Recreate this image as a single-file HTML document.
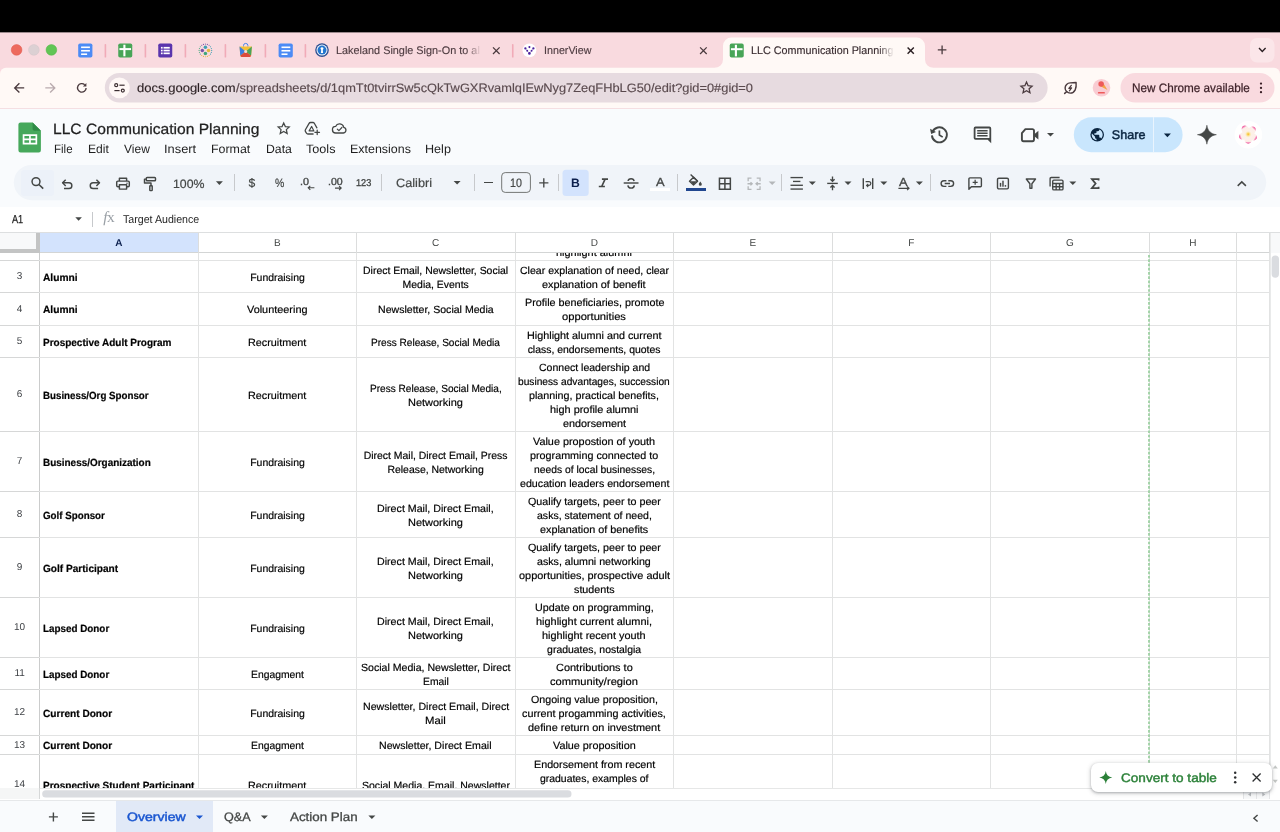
<!DOCTYPE html>
<html lang="en"><head><meta charset="utf-8"><title>LLC Communication Planning - Google Sheets</title>
<style>
*{box-sizing:border-box;margin:0;padding:0}
html,body{width:1280px;height:832px;overflow:hidden;background:#fff;font-family:"Liberation Sans",sans-serif;color:#1f1f1f;text-rendering:geometricPrecision}
.abs{position:absolute}
#root{position:relative;width:1280px;height:832px;overflow:hidden;background:#f9fbfd;will-change:transform}
.t{position:absolute;white-space:nowrap;display:block}
svg{position:absolute;overflow:visible}
.cr{-webkit-text-stroke:0.18px #000}
.cb{-webkit-text-stroke:0.2px #000}

</style></head><body><div id="root">
<div class="abs" style="left:0px;top:0px;width:1280px;height:33px;background:#000;"></div>
<div class="abs" style="left:0px;top:32.6px;width:1280px;height:45px;background:#f9dadf;"></div>
<div class="abs" style="left:0px;top:32.3px;width:1280px;height:0.8px;background:#9c8a8d;"></div>
<svg style="left:0px;top:67px;" width="1281" height="42" viewBox="0 0 1281 42"><g transform="translate(0.000 0.800)"><path d="M0 40 V6 A6 6 0 0 1 6 0 H1274 A6 6 0 0 1 1280 6 V40 Z" fill="#fff9f6"/></g></svg>
<div class="abs" style="left:0px;top:107.6px;width:1280px;height:1.2px;background:#f5dfe2;"></div>
<svg style="left:11px;top:44px;" width="12" height="13" viewBox="0 0 12 13"><g transform="translate(0.250 0.550)"><circle cx="5.35" cy="5.35" r="5.35" fill="#ed6a5e" stroke="#e1574b" stroke-width="0.5"/></g></svg>
<svg style="left:28px;top:44px;" width="13" height="13" viewBox="0 0 13 13"><g transform="translate(0.550 0.550)"><circle cx="5.35" cy="5.35" r="5.35" fill="#dcd0d3" stroke="#d2c5c8" stroke-width="0.5"/></g></svg>
<svg style="left:46px;top:44px;" width="12" height="13" viewBox="0 0 12 13"><g transform="translate(0.050 0.550)"><circle cx="5.35" cy="5.35" r="5.35" fill="#61c554" stroke="#52b546" stroke-width="0.5"/></g></svg>
<svg style="left:104px;top:44px;" width="4" height="15" viewBox="0 0 4 15"><g transform="translate(0.600 0.100)"><rect width="1.6" height="13.5" rx="0.7" fill="#f1abb8"/></g></svg>
<svg style="left:144px;top:44px;" width="4" height="15" viewBox="0 0 4 15"><g transform="translate(0.600 0.100)"><rect width="1.6" height="13.5" rx="0.7" fill="#f1abb8"/></g></svg>
<svg style="left:184px;top:44px;" width="4" height="15" viewBox="0 0 4 15"><g transform="translate(0.600 0.100)"><rect width="1.6" height="13.5" rx="0.7" fill="#f1abb8"/></g></svg>
<svg style="left:224px;top:44px;" width="4" height="15" viewBox="0 0 4 15"><g transform="translate(0.600 0.100)"><rect width="1.6" height="13.5" rx="0.7" fill="#f1abb8"/></g></svg>
<svg style="left:264px;top:44px;" width="4" height="15" viewBox="0 0 4 15"><g transform="translate(0.600 0.100)"><rect width="1.6" height="13.5" rx="0.7" fill="#f1abb8"/></g></svg>
<svg style="left:304px;top:44px;" width="4" height="15" viewBox="0 0 4 15"><g transform="translate(0.600 0.100)"><rect width="1.6" height="13.5" rx="0.7" fill="#f1abb8"/></g></svg>
<svg style="left:511px;top:44px;" width="4" height="15" viewBox="0 0 4 15"><g transform="translate(0.950 0.100)"><rect width="1.6" height="13.5" rx="0.7" fill="#f1abb8"/></g></svg>
<svg style="left:78px;top:43px;" width="16" height="16" viewBox="0 0 16 16"><g transform="translate(0.200 0.500)"><rect x="0" y="0" width="14.2" height="14" rx="1.8" fill="#4c8bf5"/><rect x="2.9" y="3" width="8.8" height="1.6" fill="#fff"/><rect x="2.9" y="6.45" width="8.8" height="1.6" fill="#fff"/><rect x="2.9" y="9.9" width="6" height="1.6" fill="#fff"/></g></svg>
<svg style="left:118px;top:43px;" width="16" height="16" viewBox="0 0 16 16"><g transform="translate(0.250 0.500)"><rect width="14" height="14" rx="1.8" fill="#48a557"/><rect x="5.1" y="1.2" width="2.1" height="11.6" fill="#fff"/><rect x="1.2" y="4.6" width="11.6" height="2" fill="#fff"/></g></svg>
<svg style="left:158px;top:43px;" width="16" height="16" viewBox="0 0 16 16"><g transform="translate(0.250 0.500)"><rect width="14" height="14" rx="1.8" fill="#5a35ad"/><g fill="#fff"><rect x="2.7" y="3.4" width="1.7" height="1.7"/><rect x="5.3" y="3.4" width="6.2" height="1.7"/><rect x="2.7" y="6.2" width="1.7" height="1.7"/><rect x="5.3" y="6.2" width="6.2" height="1.7"/><rect x="2.7" y="9" width="1.7" height="1.7"/><rect x="5.3" y="9" width="6.2" height="1.7"/></g></g></svg>
<svg style="left:198px;top:43px;" width="16" height="16" viewBox="0 0 16 16"><g transform="translate(0.400 0.400)"><circle cx="13.30" cy="7.00" r="0.55" fill="#3f9fb5"/><circle cx="12.99" cy="8.95" r="0.55" fill="#3f9fb5"/><circle cx="12.10" cy="10.70" r="0.55" fill="#3f9fb5"/><circle cx="10.70" cy="12.10" r="0.55" fill="#e5b93c"/><circle cx="8.95" cy="12.99" r="0.55" fill="#e5b93c"/><circle cx="7.00" cy="13.30" r="0.55" fill="#e5b93c"/><circle cx="5.05" cy="12.99" r="0.55" fill="#e5b93c"/><circle cx="3.30" cy="12.10" r="0.55" fill="#e5b93c"/><circle cx="1.90" cy="10.70" r="0.55" fill="#3fa77a"/><circle cx="1.01" cy="8.95" r="0.55" fill="#3fa77a"/><circle cx="0.70" cy="7.00" r="0.55" fill="#3fa77a"/><circle cx="1.01" cy="5.05" r="0.55" fill="#3fa77a"/><circle cx="1.90" cy="3.30" r="0.55" fill="#3fa77a"/><circle cx="3.30" cy="1.90" r="0.55" fill="#7a55a8"/><circle cx="5.05" cy="1.01" r="0.55" fill="#7a55a8"/><circle cx="7.00" cy="0.70" r="0.55" fill="#7a55a8"/><circle cx="8.95" cy="1.01" r="0.55" fill="#7a55a8"/><circle cx="10.70" cy="1.90" r="0.55" fill="#7a55a8"/><circle cx="12.10" cy="3.30" r="0.55" fill="#3f9fb5"/><circle cx="12.99" cy="5.05" r="0.55" fill="#3f9fb5"/><circle cx="7" cy="3.9" r="1.75" fill="#3f9fb5"/><circle cx="3.9" cy="7" r="1.75" fill="#7a55a8"/><circle cx="10.1" cy="7" r="1.75" fill="#e5b93c"/><circle cx="7" cy="10.1" r="1.75" fill="#3fa77a"/></g></svg>
<svg style="left:239px;top:43px;" width="15" height="16" viewBox="0 0 15 16"><g transform="translate(0.200 0.000)"><path d="M4.3 3.6 V2.6 a2.2 2.2 0 0 1 4.4 0 V3.6" fill="none" stroke="#4a86e8" stroke-width="1"/><path d="M0.3 3.6 H12.7 L11.9 12.6 a1.4 1.4 0 0 1 -1.4 1.3 H2.5 a1.4 1.4 0 0 1 -1.4 -1.3 Z" fill="#f3c13a"/><path d="M0.3 3.6 L6.5 8.6 L1.1 12.8 Z" fill="#3f7de0"/><path d="M12.7 3.6 L6.5 8.6 L11.9 12.8 Z" fill="#4aa35a"/><path d="M6.5 8.6 L11.9 12.8 a1.4 1.4 0 0 1 -1.4 1.1 H2.5 a1.4 1.4 0 0 1 -1.4 -1.1 Z" fill="#dc4a3d"/><circle cx="6.5" cy="8.4" r="1.5" fill="#f4ddd6"/></g></svg>
<svg style="left:278px;top:43px;" width="16" height="16" viewBox="0 0 16 16"><g transform="translate(0.600 0.500)"><rect x="0" y="0" width="14.2" height="14" rx="1.8" fill="#4c8bf5"/><rect x="2.9" y="3" width="8.8" height="1.6" fill="#fff"/><rect x="2.9" y="6.45" width="8.8" height="1.6" fill="#fff"/><rect x="2.9" y="9.9" width="6" height="1.6" fill="#fff"/></g></svg>
<svg style="left:315px;top:43px;" width="15" height="15" viewBox="0 0 15 15"><g transform="translate(0.200 0.300)"><circle cx="6.8" cy="6.8" r="6.8" fill="#2c4f91"/><circle cx="6.8" cy="6.8" r="5.5" fill="#f3f6fb"/><circle cx="6.8" cy="6.8" r="4.5" fill="#2277cf"/><circle cx="6.8" cy="5.3" r="1.45" fill="#fff"/><path d="M6.1 5.6 H7.5 L7.9 9.6 H5.7 Z" fill="#fff"/></g></svg>
<span class="t" style="left:336.00px;top:46px;font-size:11px;line-height:11px;color:#4f3d42;transform:scaleX(0.9880);transform-origin:0 0;-webkit-text-stroke:0.15px #4f3d42;">Lakeland Single Sign-On to al</span>
<div class="abs" style="left:466px;top:42px;width:18px;height:17px;background:linear-gradient(to right,rgba(249,218,223,0),#f9dadf 85%)"></div>
<svg style="left:493px;top:47px;" width="8" height="9" viewBox="0 0 8 9"><g transform="translate(0.000 0.400)"><path d="M0 0 L6.6 6.6 M6.6 0 L0 6.6" stroke="#4a3a3e" stroke-width="1.25" fill="none"/></g></svg>
<svg style="left:522px;top:43px;" width="16" height="16" viewBox="0 0 16 16"><g transform="translate(0.500 0.500)"><circle cx="6.9" cy="6.9" r="6.9" fill="#fff"/><g fill="#4a1f9c"><circle cx="6.9" cy="3.6" r="1.05"/><circle cx="2.9" cy="4.9" r="1.15"/><circle cx="10.9" cy="4.9" r="1.15"/><circle cx="4.7" cy="7.3" r="0.95"/><circle cx="9.1" cy="7.3" r="0.95"/><circle cx="6.9" cy="9.9" r="1.3"/><path d="M2.9 4.9 L6.9 9.9 L10.9 4.9" stroke="#4a1f9c" stroke-width="0.5" fill="none" opacity="0.55"/></g></g></svg>
<span class="t" style="left:543.80px;top:46px;font-size:11px;line-height:11px;color:#4f3d42;transform:scaleX(0.9730);transform-origin:0 0;-webkit-text-stroke:0.15px #4f3d42;">InnerView</span>
<svg style="left:700px;top:47px;" width="8" height="9" viewBox="0 0 8 9"><g transform="translate(0.100 0.400)"><path d="M0 0 L6.6 6.6 M6.6 0 L0 6.6" stroke="#4a3a3e" stroke-width="1.25" fill="none"/></g></svg>
<svg style="left:714px;top:37px;" width="221" height="32" viewBox="0 0 221 32"><g transform="translate(0.500 0.600)"><path d="M0 30.4 A8.5 8.5 0 0 0 8.5 21.9 V8.5 A8.5 8.5 0 0 1 17 0 H202 A8.5 8.5 0 0 1 210.5 8.5 V21.9 A8.5 8.5 0 0 0 219 30.4 Z" fill="#fff9f6"/></g></svg>
<svg style="left:729px;top:43px;" width="16" height="16" viewBox="0 0 16 16"><g transform="translate(0.750 0.600)"><rect width="14" height="14" rx="1.8" fill="#48a557"/><rect x="5.1" y="1.2" width="2.1" height="11.6" fill="#fff"/><rect x="1.2" y="4.6" width="11.6" height="2" fill="#fff"/></g></svg>
<span class="t" style="left:750.90px;top:46px;font-size:11px;line-height:11px;color:#3a2d31;transform:scaleX(0.9799);transform-origin:0 0;-webkit-text-stroke:0.15px #3a2d31;">LLC Communication Planning</span>
<div class="abs" style="left:878px;top:42px;width:18px;height:17px;background:linear-gradient(to right,rgba(255,248,245,0),#fff9f6 90%)"></div>
<svg style="left:907px;top:47px;" width="8" height="8" viewBox="0 0 8 8"><g transform="translate(0.600 0.600)"><path d="M0 0 L6.2 6.2 M6.2 0 L0 6.2" stroke="#2a1f22" stroke-width="1.45" fill="none"/></g></svg>
<svg style="left:937px;top:45px;" width="11" height="11" viewBox="0 0 11 11"><g transform="translate(0.800 0.600)"><path d="M4.3 0 V8.6 M0 4.3 H8.6" stroke="#4a3a3e" stroke-width="1.3" fill="none"/></g></svg>
<svg style="left:1250px;top:38px;" width="26" height="26" viewBox="0 0 26 26"><g><rect width="24.5" height="24.5" rx="7" fill="#fbe6e9"/></g></svg>
<svg style="left:1258px;top:47px;" width="9" height="7" viewBox="0 0 9 7"><g transform="translate(0.600 0.600)"><path d="M0.4 0.5 L3.7 3.8 L7 0.5" stroke="#2a1f22" stroke-width="1.4" fill="none"/></g></svg>
<svg style="left:13px;top:82px;" width="13" height="13" viewBox="0 0 13 13"><g transform="translate(0.800 0.600)"><path d="M5.6 0.6 L0.9 5.3 L5.6 10 M1 5.3 H10.4" stroke="#4a3a3e" stroke-width="1.35" fill="none"/></g></svg>
<svg style="left:45px;top:82px;" width="12" height="13" viewBox="0 0 12 13"><g transform="translate(0.100 0.600)"><path d="M5 0.6 L9.7 5.3 L5 10 M9.6 5.3 H0.2" stroke="#b9abae" stroke-width="1.35" fill="none"/></g></svg>
<svg style="left:76px;top:82px;" width="13" height="13" viewBox="0 0 13 13"><g transform="translate(0.500 0.500)"><path d="M9.6 5.4 A4.3 4.3 0 1 1 8.2 2.2" stroke="#4a3a3e" stroke-width="1.35" fill="none"/><path d="M9.9 0.4 V3.9 H6.4 Z" fill="#4a3a3e"/></g></svg>
<svg style="left:104px;top:73px;" width="945" height="31" viewBox="0 0 945 31"><g transform="translate(0.800 0.000)"><rect width="942.8" height="29.6" rx="14.8" fill="#e7dbe0"/></g></svg>
<svg style="left:109px;top:77px;" width="22" height="23" viewBox="0 0 22 23"><g transform="translate(0.000 0.400)"><circle cx="10.4" cy="10.4" r="10.4" fill="#fff8f6"/></g></svg>
<svg style="left:114px;top:83px;" width="12" height="11" viewBox="0 0 12 11"><g transform="translate(0.000 0.200)"><g stroke="#3b2e31" stroke-width="1.2" fill="none"><circle cx="2.2" cy="2" r="1.5"/><path d="M5.4 2 H10.6"/><circle cx="8.8" cy="7.4" r="1.5"/><path d="M0.4 7.4 H5.6"/></g></g></svg>
<span class="t" style="left:137.10px;top:82px;font-size:12.2px;line-height:12.2px;color:#2a1f22;transform:scaleX(1.0690);transform-origin:0 0;-webkit-text-stroke:0.15px #2a1f22;">docs.google.com</span>
<span class="t" style="left:235.60px;top:82px;font-size:12.2px;line-height:12.2px;color:#5a4a4e;transform:scaleX(1.0527);transform-origin:0 0;-webkit-text-stroke:0.15px #5a4a4e;">/spreadsheets/d/1qmTt0tvirrSw5cQkTwGXRvamlqIEwNyg7ZeqFHbLG50/edit?gid=0#gid=0</span>
<svg style="left:1020px;top:81px;" width="14" height="14" viewBox="0 0 14 14"><g transform="translate(0.100 0.200)"><path d="M6.4 0.9 L8.0 4.55 L11.95 4.95 L9 7.6 L9.85 11.5 L6.4 9.5 L2.95 11.5 L3.8 7.6 L0.85 4.95 L4.8 4.55 Z" stroke="#4a3a3e" stroke-width="1.3" fill="none" stroke-linejoin="miter"/></g></svg>
<svg style="left:1063px;top:81px;" width="15" height="15" viewBox="0 0 15 15"><g transform="translate(0.900 0.800)"><g stroke="#4a3a3e" fill="none" stroke-linejoin="round" stroke-linecap="round"><path d="M12.2 0.7 C12.7 6.2 11.3 11.3 6.3 11.3 A5.1 5.1 0 0 1 6.3 1.1 C8.6 1.1 10.5 0.9 12.2 0.7 Z" stroke-width="1.4"/><path d="M2.7 9.9 L0.8 11.6" stroke-width="1.5"/><path d="M7.4 3.5 L5 6.6 L7.7 6 L5.5 9" stroke-width="1.25"/></g></g></svg>
<svg style="left:1092px;top:79px;" width="20" height="19" viewBox="0 0 20 19"><g transform="translate(0.700 0.000)"><circle cx="8.8" cy="8.8" r="8.8" fill="#f9ccd2"/></g></svg>
<svg style="left:1092px;top:79px;" width="20" height="19" viewBox="0 0 20 19"><g transform="translate(0.700 0.000)"><path d="M7.3 6.9 L10.7 4.3 L14.8 10.9 Z" fill="#f2a545"/><circle cx="8.4" cy="4.9" r="2.75" fill="#ee5a5a"/><rect x="5.2" y="13.1" width="7" height="1.5" rx="0.6" fill="#ee5a5a"/></g></svg>
<svg style="left:1120px;top:73px;" width="156" height="31" viewBox="0 0 156 31"><g transform="translate(0.500 0.000)"><rect width="154" height="29.6" rx="14.8" fill="#f9dadf"/></g></svg>
<span class="t" style="left:1131.50px;top:82px;font-size:12.2px;line-height:12.2px;color:#3b1f26;transform:scaleX(0.9608);transform-origin:0 0;-webkit-text-stroke:0.25px #3b1f26;">New Chrome available</span>
<svg style="left:1259px;top:82px;" width="5" height="4" viewBox="0 0 5 4"><g transform="translate(0.850 0.450)"><circle cx="1.15" cy="1.15" r="1.15" fill="#3b1f26"/></g></svg>
<svg style="left:1259px;top:86px;" width="5" height="5" viewBox="0 0 5 5"><g transform="translate(0.850 0.750)"><circle cx="1.15" cy="1.15" r="1.15" fill="#3b1f26"/></g></svg>
<svg style="left:1259px;top:91px;" width="5" height="4" viewBox="0 0 5 4"><g transform="translate(0.850 0.050)"><circle cx="1.15" cy="1.15" r="1.15" fill="#3b1f26"/></g></svg>
<svg style="left:18px;top:122px;" width="24" height="32" viewBox="0 0 24 32"><g transform="translate(0.400 0.400)"><path d="M2.2 0 H14.2 L22.5 8.3 V27.9 a2.2 2.2 0 0 1 -2.2 2.2 H2.2 a2.2 2.2 0 0 1 -2.2 -2.2 V2.2 a2.2 2.2 0 0 1 2.2 -2.2 Z" fill="#46a85b"/><path d="M14.2 0 L22.5 8.3 H16 a1.8 1.8 0 0 1 -1.8 -1.8 Z" fill="#2f8a46"/><path d="M4.3 11.9 H18.8 V22 H4.3 Z M6 13.6 V16.1 H10.7 V13.6 Z M12.4 13.6 V16.1 H17.1 V13.6 Z M6 17.8 V20.3 H10.7 V17.8 Z M12.4 17.8 V20.3 H17.1 V17.8 Z" fill="#fff" fill-rule="evenodd"/></g></svg>
<span class="t" style="left:53.40px;top:123px;font-size:14.9px;line-height:14.9px;color:#1f1f1f;transform:scaleX(1.0477);transform-origin:0 0;-webkit-text-stroke:0.25px #1f1f1f;">LLC Communication Planning</span>
<span class="t" style="left:54.40px;top:143px;font-size:12.1px;line-height:12.1px;color:#1f1f1f;transform:scaleX(0.9545);transform-origin:0 0;">File</span>
<span class="t" style="left:88.00px;top:143px;font-size:12.1px;line-height:12.1px;color:#1f1f1f;">Edit</span>
<span class="t" style="left:123.90px;top:143px;font-size:12.1px;line-height:12.1px;color:#1f1f1f;transform:scaleX(0.9925);transform-origin:0 0;">View</span>
<span class="t" style="left:164.30px;top:143px;font-size:12.1px;line-height:12.1px;color:#1f1f1f;transform:scaleX(1.0646);transform-origin:0 0;">Insert</span>
<span class="t" style="left:211.20px;top:143px;font-size:12.1px;line-height:12.1px;color:#1f1f1f;transform:scaleX(1.0261);transform-origin:0 0;">Format</span>
<span class="t" style="left:265.60px;top:143px;font-size:12.1px;line-height:12.1px;color:#1f1f1f;transform:scaleX(1.0139);transform-origin:0 0;">Data</span>
<span class="t" style="left:306.00px;top:143px;font-size:12.1px;line-height:12.1px;color:#1f1f1f;transform:scaleX(1.0449);transform-origin:0 0;">Tools</span>
<span class="t" style="left:349.60px;top:143px;font-size:12.1px;line-height:12.1px;color:#1f1f1f;transform:scaleX(1.0294);transform-origin:0 0;">Extensions</span>
<span class="t" style="left:424.60px;top:143px;font-size:12.1px;line-height:12.1px;color:#1f1f1f;transform:scaleX(1.0413);transform-origin:0 0;">Help</span>
<svg style="left:277px;top:122px;" width="15" height="14" viewBox="0 0 15 14"><g transform="translate(0.300 0.000)"><path d="M6.4 1 L8.05 4.55 L11.95 5 L9.05 7.65 L9.85 11.5 L6.4 9.55 L2.95 11.5 L3.75 7.65 L0.85 5 L4.75 4.55 Z" stroke="#444746" stroke-width="1.25" fill="none" stroke-linejoin="miter"/></g></svg>
<svg style="left:304px;top:121px;" width="17" height="16" viewBox="0 0 17 16"><g transform="translate(0.500 0.800)"><g stroke="#444746" stroke-width="1.3" fill="none" stroke-linejoin="round" stroke-linecap="round"><path d="M8.6 12.2 H3.4 a1.6 1.6 0 0 1 -1.4 -0.8 L0.9 9.5 a1.6 1.6 0 0 1 0 -1.6 L4.6 1.5 a1.6 1.6 0 0 1 1.4 -0.8 H8.4 a1.6 1.6 0 0 1 1.4 0.8 L12.4 6"/><path d="M7.2 4.6 L4.6 9.1 H9.4 Z" stroke-width="1.1"/><path d="M12.7 8.2 V12.8 M10.4 10.5 H15" stroke-width="1.25"/></g></g></svg>
<svg style="left:331px;top:123px;" width="18" height="12" viewBox="0 0 18 12"><g transform="translate(0.900 0.200)"><g stroke="#444746" stroke-width="1.3" fill="none" stroke-linejoin="round" stroke-linecap="round"><path d="M4 9.8 a3.3 3.3 0 0 1 -0.3 -6.6 a4.3 4.3 0 0 1 8.1 0.9 a2.9 2.9 0 0 1 -0.3 5.7 Z"/><path d="M5.4 5.9 L7 7.5 L10 4.3" stroke-width="1.2"/></g></g></svg>
<svg style="left:929px;top:125px;" width="20" height="20" viewBox="0 0 20 20"><g transform="translate(0.800 0.800)"><g stroke="#444746" fill="none" stroke-width="1.9"><path d="M2.6 6.3 A7.5 7.5 0 1 1 2.1 9.6"/><path d="M9.6 4.6 V9.2 L12.9 11.3" stroke-width="1.7"/></g><path d="M0.3 3 L1.3 8.1 L6.2 6.2 Z" fill="#444746"/></g></svg>
<svg style="left:973px;top:126px;" width="20" height="19" viewBox="0 0 20 19"><g transform="translate(0.700 0.600)"><path d="M1.8 0 H15.7 a1.8 1.8 0 0 1 1.8 1.8 V16.6 L14 13.2 H1.8 a1.8 1.8 0 0 1 -1.8 -1.8 V1.8 a1.8 1.8 0 0 1 1.8 -1.8 Z M1.8 1.8 V11.4 H15.7 V1.8 Z" fill="#444746" fill-rule="evenodd"/><g fill="#444746"><rect x="3.5" y="3.4" width="10.4" height="1.5"/><rect x="3.5" y="5.9" width="10.4" height="1.5"/><rect x="3.5" y="8.4" width="10.4" height="1.5"/></g></g></svg>
<svg style="left:1021px;top:128px;" width="19" height="16" viewBox="0 0 19 16"><g transform="translate(0.000 0.200)"><path d="M4.4 0.95 H11.4 a1.6 1.6 0 0 1 1.6 1.6 V11.4 a1.6 1.6 0 0 1 -1.6 1.6 H2.5 a1.6 1.6 0 0 1 -1.6 -1.6 V4.9 Z" stroke="#444746" stroke-width="1.9" fill="none" stroke-linejoin="round"/><path d="M13 6.2 L17.4 2.6 V11.4 L13 7.8 Z" fill="#444746"/></g></svg>
<svg style="left:1047px;top:133px;" width="8" height="5" viewBox="0 0 8 5"><g><path d="M0 0 H7 L3.5 3.6 Z" fill="#444746"/></g></svg>
<svg style="left:1073px;top:117px;" width="111" height="37" viewBox="0 0 111 37"><g transform="translate(0.800 0.300)"><rect width="108.8" height="34.9" rx="17.45" fill="#c9e6fd"/></g></svg>
<div class="abs" style="left:1153.2px;top:117.3px;width:0.9px;height:34.9px;background:#e9f4fe;"></div>
<svg style="left:1090px;top:127px;" width="16" height="16" viewBox="0 0 16 16"><g transform="translate(0.400 0.900)"><circle cx="6.8" cy="6.8" r="6.8" fill="#0a2540"/><path d="M6.1 12.4 C3.4 12 1.3 9.7 1.3 6.9 c0 -0.4 0.1 -0.9 0.2 -1.3 L4.7 8.8 v0.7 c0 0.8 0.6 1.4 1.4 1.4 Z M10.9 10.6 c-0.2 -0.6 -0.7 -1 -1.3 -1 H8.9 V7.5 c0 -0.4 -0.3 -0.7 -0.7 -0.7 H4 V5.4 h1.4 c0.4 0 0.7 -0.3 0.7 -0.7 V3.3 h1.4 c0.8 0 1.4 -0.6 1.4 -1.4 V1.6 c2 0.8 3.4 2.8 3.4 5.1 c0 1.4 -0.5 2.8 -1.4 3.9 Z" fill="#c9e6fd"/></g></svg>
<span class="t" style="left:1111.80px;top:129px;font-size:12.6px;line-height:12.6px;color:#0a2540;-webkit-text-stroke:0.45px #0a2540;">Share</span>
<svg style="left:1163px;top:133px;" width="9" height="6" viewBox="0 0 9 6"><g transform="translate(0.900 0.600)"><path d="M0 0 H7 L3.5 3.6 Z" fill="#0a2540"/></g></svg>
<svg style="left:1197px;top:125px;" width="21" height="21" viewBox="0 0 21 21"><g transform="translate(0.400 0.200)"><path d="M9.5 0 C10.3 5.5 13.5 8.7 19 9.5 C13.5 10.3 10.3 13.5 9.5 19 C8.7 13.5 5.5 10.3 0 9.5 C5.5 8.7 8.7 5.5 9.5 0 Z" fill="#444746" stroke="#444746" stroke-width="0.5" stroke-linejoin="round"/></g></svg>
<svg style="left:1234px;top:120px;" width="30" height="30" viewBox="0 0 30 30"><g transform="translate(0.600 0.900)"><circle cx="13.8" cy="13.8" r="13.8" fill="#fff"/></g></svg>
<svg style="left:1238px;top:124px;" width="22" height="22" viewBox="0 0 22 22"><g transform="translate(0.200 0.200)"><defs><linearGradient id="pt" x1="0" y1="0" x2="0" y2="1"><stop offset="0" stop-color="#ee4a92"/><stop offset="0.1" stop-color="#f47fb4"/><stop offset="0.24" stop-color="#fdeee9"/><stop offset="1" stop-color="#fcf3e6"/></linearGradient><radialGradient id="fl" cx="50%" cy="50%" r="50%"><stop offset="0" stop-color="#f9ad22"/><stop offset="0.35" stop-color="#fbd756" stop-opacity="0.8"/><stop offset="1" stop-color="#fdf0d0" stop-opacity="0"/></radialGradient></defs><g transform="rotate(-32 10 10)"><ellipse cx="10" cy="5.3" rx="3.8" ry="4.9" fill="url(#pt)"/></g><g transform="rotate(45 10 10)"><ellipse cx="10" cy="5.3" rx="3.8" ry="4.9" fill="url(#pt)"/></g><g transform="rotate(119 10 10)"><ellipse cx="10" cy="5.3" rx="3.8" ry="4.9" fill="url(#pt)"/></g><g transform="rotate(180 10 10)"><ellipse cx="10" cy="5.3" rx="3.8" ry="4.9" fill="url(#pt)"/></g><g transform="rotate(250 10 10)"><ellipse cx="10" cy="5.3" rx="3.8" ry="4.9" fill="url(#pt)"/></g><circle cx="10" cy="10" r="3.6" fill="url(#fl)"/></g></svg>
<svg style="left:13px;top:164px;" width="1255" height="38" viewBox="0 0 1255 38"><g transform="translate(0.800 0.900)"><rect width="1252.4" height="35.3" rx="17.65" fill="#f0f4f9"/></g></svg>
<svg style="left:21px;top:170px;" width="34" height="27" viewBox="0 0 34 27"><g><rect width="33" height="26" rx="3" fill="#ecf1f9"/></g></svg>
<svg style="left:31px;top:176px;" width="14" height="15" viewBox="0 0 14 15"><g transform="translate(0.200 0.800)"><circle cx="4.8" cy="4.8" r="3.95" stroke="#444746" stroke-width="1.5" fill="none"/><path d="M7.7 7.7 L12 11.8" stroke="#444746" stroke-width="1.6"/></g></svg>
<svg style="left:61px;top:179px;" width="13" height="11" viewBox="0 0 13 11"><g transform="translate(0.800 0.200)"><g stroke="#444746" stroke-width="1.45" fill="none" stroke-linejoin="round"><path d="M3.9 0.5 L0.8 3.6 L3.9 6.7"/><path d="M1 3.6 H7.2 a2.85 2.85 0 0 1 0 5.7 H2.2"/></g></g></svg>
<svg style="left:89px;top:179px;" width="13" height="11" viewBox="0 0 13 11"><g transform="translate(0.500 0.200)"><g stroke="#444746" stroke-width="1.45" fill="none" stroke-linejoin="round"><path d="M6.9 0.5 L10 3.6 L6.9 6.7"/><path d="M9.8 3.6 H3.6 a2.85 2.85 0 0 0 0 5.7 H8.6"/></g></g></svg>
<svg style="left:116px;top:177px;" width="15" height="14" viewBox="0 0 15 14"><g transform="translate(0.000 0.500)"><g stroke="#444746" stroke-width="1.45" fill="none" stroke-linejoin="round"><path d="M3.4 3.6 V0.7 H10.6 V3.6"/><path d="M3.4 9.3 H1.9 a1.2 1.2 0 0 1 -1.2 -1.2 V4.8 a1.2 1.2 0 0 1 1.2 -1.2 H12.1 a1.2 1.2 0 0 1 1.2 1.2 V8.1 a1.2 1.2 0 0 1 -1.2 1.2 H10.6"/><path d="M3.4 7.3 H10.6 V11.6 H3.4 Z"/></g><circle cx="11" cy="5.7" r="0.7" fill="#444746"/></g></svg>
<svg style="left:143px;top:176px;" width="15" height="17" viewBox="0 0 15 17"><g transform="translate(0.700 0.800)"><g stroke="#444746" stroke-width="1.45" fill="none" stroke-linejoin="round"><rect x="2.6" y="0.7" width="9.2" height="3.2" rx="0.8"/><path d="M2.6 2.3 H0.8 V6.2 H7.3 V9"/><rect x="6.1" y="9" width="2.4" height="4.8" rx="0.5"/></g></g></svg>
<span class="t" style="left:172.50px;top:178px;font-size:12.1px;line-height:12.1px;color:#444746;transform:scaleX(1.0184);transform-origin:0 0;-webkit-text-stroke:0.2px #444746;">100%</span>
<svg style="left:215px;top:181px;" width="9" height="5" viewBox="0 0 9 5"><g transform="translate(0.900 0.300)"><path d="M0 0 H7 L3.5 3.6 Z" fill="#444746"/></g></svg>
<div class="abs" style="left:234.15px;top:174.1px;width:0.9px;height:17.2px;background:#c7c9cc;"></div>
<span class="t" style="left:248.54px;top:177px;font-size:12.1px;line-height:12.1px;color:#444746;-webkit-text-stroke:0.2px #444746;">$</span>
<span class="t" style="left:274.85px;top:177px;font-size:12.1px;line-height:12.1px;color:#444746;transform:scaleX(0.8649);transform-origin:0 0;-webkit-text-stroke:0.2px #444746;">%</span>
<span class="t" style="left:299.80px;top:178px;font-size:10.2px;line-height:10.2px;color:#444746;transform:scaleX(1.0593);transform-origin:0 0;-webkit-text-stroke:0.35px #444746;">.0</span>
<svg style="left:307px;top:185px;" width="9" height="7" viewBox="0 0 9 7"><g transform="translate(0.400 0.400)"><path d="M7 2.4 H0.9 M2.9 0.4 L0.8 2.4 L2.9 4.4" stroke="#444746" stroke-width="1.1" fill="none"/></g></svg>
<span class="t" style="left:327.80px;top:178px;font-size:10.2px;line-height:10.2px;color:#444746;transform:scaleX(1.0380);transform-origin:0 0;-webkit-text-stroke:0.35px #444746;">.00</span>
<svg style="left:335px;top:185px;" width="8" height="7" viewBox="0 0 8 7"><g transform="translate(0.000 0.700)"><path d="M0 2.4 H6.1 M4.1 0.4 L6.2 2.4 L4.1 4.4" stroke="#444746" stroke-width="1.1" fill="none"/></g></svg>
<span class="t" style="left:356.20px;top:179px;font-size:9.9px;line-height:9.9px;color:#444746;transform:scaleX(0.9286);transform-origin:0 0;-webkit-text-stroke:0.3px #444746;">123</span>
<div class="abs" style="left:381.05px;top:174.1px;width:0.9px;height:17.2px;background:#c7c9cc;"></div>
<span class="t" style="left:395.90px;top:177px;font-size:12.2px;line-height:12.2px;color:#444746;transform:scaleX(1.0423);transform-origin:0 0;-webkit-text-stroke:0.2px #444746;">Calibri</span>
<svg style="left:453px;top:181px;" width="9" height="5" viewBox="0 0 9 5"><g transform="translate(0.600 0.000)"><path d="M0 0 H7 L3.5 3.6 Z" fill="#444746"/></g></svg>
<div class="abs" style="left:473.65000000000003px;top:174.1px;width:0.9px;height:17.2px;background:#c7c9cc;"></div>
<div class="abs" style="left:483.5px;top:182.1px;width:9.3px;height:1.35px;background:#444746;"></div>
<svg style="left:501px;top:172px;" width="31" height="22" viewBox="0 0 31 22"><g transform="translate(0.200 0.100)"><rect x="0.5" y="0.5" width="28.7" height="19.8" rx="3.5" fill="none" stroke="#747775" stroke-width="1"/></g></svg>
<span class="t" style="left:510.05px;top:177px;font-size:12.2px;line-height:12.2px;color:#444746;transform:scaleX(0.8778);transform-origin:0 0;-webkit-text-stroke:0.2px #444746;">10</span>
<svg style="left:539px;top:178px;" width="11" height="11" viewBox="0 0 11 11"><g transform="translate(0.200 0.200)"><path d="M4.6 0 V9.2 M0 4.6 H9.2" stroke="#444746" stroke-width="1.35" fill="none"/></g></svg>
<div class="abs" style="left:558.05px;top:174.1px;width:0.9px;height:17.2px;background:#c7c9cc;"></div>
<svg style="left:562px;top:169px;" width="28" height="28" viewBox="0 0 28 28"><g transform="translate(0.500 0.800)"><rect width="26.2" height="26.1" rx="3.5" fill="#d3e3fd"/></g></svg>
<span class="t" style="left:570.90px;top:177px;font-size:12.2px;line-height:12.2px;color:#0b1f4d;font-weight:700;">B</span>
<svg style="left:598px;top:178px;" width="12" height="11" viewBox="0 0 12 11"><g transform="translate(0.400 0.300)"><path d="M3.5 0.8 H9.6 M0.4 8.2 H6.5 M6.7 0.8 L3.3 8.2" stroke="#444746" stroke-width="1.65" fill="none"/></g></svg>
<svg style="left:623px;top:178px;" width="17" height="12" viewBox="0 0 17 12"><g transform="translate(0.700 0.000)"><g stroke="#444746" stroke-width="1.45" fill="none"><path d="M0 5 H14.8"/><path d="M10.4 3.1 C10.2 1.5 9 0.7 7.4 0.7 C5.7 0.7 4.5 1.6 4.4 3"/><path d="M4.2 7.3 C4.4 9.1 5.7 10.1 7.4 10.1 C9.2 10.1 10.5 9.1 10.6 7.4"/></g></g></svg>
<span class="t" style="left:655.50px;top:177px;font-size:11.8px;line-height:11.8px;color:#444746;transform:scaleX(1.0930);transform-origin:0 0;-webkit-text-stroke:0.3px #444746;">A</span>
<div class="abs" style="left:650px;top:188.1px;width:20px;height:3.2px;background:#fff;"></div>
<div class="abs" style="left:677.05px;top:174.1px;width:0.9px;height:17.2px;background:#c7c9cc;"></div>
<svg style="left:688px;top:174px;" width="16" height="13" viewBox="0 0 16 13"><g transform="translate(0.600 0.000)"><g stroke="#444746" stroke-width="1.4" fill="none" stroke-linejoin="round"><path d="M2 0.5 L9 7.3"/><path d="M5 3.3 L0.9 7.3 L4.9 11.1 L9 7.3 Z"/></g><path d="M1.6 7.3 H8.4 L4.9 10.6 Z" fill="#444746"/><path d="M11.7 7.6 C12.4 8.7 13.2 9.4 13.2 10.3 a1.5 1.5 0 0 1 -3 0 C10.2 9.4 11 8.7 11.7 7.6 Z" fill="#444746"/></g></svg>
<div class="abs" style="left:685.6px;top:188.1px;width:20.4px;height:3.4px;background:#20468f;"></div>
<svg style="left:718px;top:177px;" width="15" height="14" viewBox="0 0 15 14"><g transform="translate(0.700 0.500)"><g stroke="#444746" stroke-width="1.5" fill="none"><rect x="0.75" y="0.75" width="10.9" height="11"/><path d="M6.2 0.75 V11.75 M0.75 6.25 H11.65"/></g></g></svg>
<svg style="left:747px;top:177px;" width="15" height="14" viewBox="0 0 15 14"><g transform="translate(0.500 0.500)"><g stroke="#b4b7ba" stroke-width="1.3" fill="none"><path d="M0.65 3.8 V0.65 H4 M9.2 0.65 H12.55 V3.8 M0.65 8.7 V11.85 H4 M9.2 11.85 H12.55 V8.7"/><path d="M0 6.25 H4.6 M3 4.6 L4.7 6.25 L3 7.9 M13.2 6.25 H8.6 M10.2 4.6 L8.5 6.25 L10.2 7.9"/></g></g></svg>
<svg style="left:768px;top:181px;" width="9" height="5" viewBox="0 0 9 5"><g transform="translate(0.700 0.400)"><path d="M0 0 H7 L3.5 3.6 Z" fill="#b4b7ba"/></g></svg>
<div class="abs" style="left:780.9499999999999px;top:174.1px;width:0.9px;height:17.2px;background:#c7c9cc;"></div>
<svg style="left:790px;top:176px;" width="14" height="15" viewBox="0 0 14 15"><g transform="translate(0.500 0.900)"><g fill="#444746"><rect x="0" y="0" width="12.4" height="1.35"/><rect x="2.5" y="3.85" width="7.4" height="1.35"/><rect x="0" y="7.7" width="12.4" height="1.35"/><rect x="0" y="11.5" width="12.4" height="1.35"/></g></g></svg>
<svg style="left:808px;top:181px;" width="9" height="5" viewBox="0 0 9 5"><g transform="translate(0.800 0.400)"><path d="M0 0 H7 L3.5 3.6 Z" fill="#444746"/></g></svg>
<svg style="left:827px;top:176px;" width="12" height="16" viewBox="0 0 12 16"><g transform="translate(0.200 0.500)"><g stroke="#444746" stroke-width="1.35" fill="none"><path d="M0 6.9 H10.6"/><path d="M5.3 0 V4.6 M3.2 2.7 L5.3 4.8 L7.4 2.7"/><path d="M5.3 13.8 V9.2 M3.2 11.1 L5.3 9 L7.4 11.1"/></g></g></svg>
<svg style="left:844px;top:181px;" width="9" height="5" viewBox="0 0 9 5"><g transform="translate(0.500 0.400)"><path d="M0 0 H7 L3.5 3.6 Z" fill="#444746"/></g></svg>
<svg style="left:862px;top:178px;" width="13" height="12" viewBox="0 0 13 12"><g transform="translate(0.600 0.200)"><g stroke="#444746" stroke-width="1.4" fill="none"><path d="M0.7 0 V10.8 M10.1 0 V10.8"/><path d="M3 3.4 H6.3 a1.9 1.9 0 0 1 0 3.8 H4.2" stroke-width="1.2"/><path d="M5.6 5.6 L4 7.2 L5.6 8.8" stroke-width="1.1"/></g></g></svg>
<svg style="left:880px;top:181px;" width="9" height="5" viewBox="0 0 9 5"><g transform="translate(0.300 0.400)"><path d="M0 0 H7 L3.5 3.6 Z" fill="#444746"/></g></svg>
<span class="t" style="left:899.10px;top:177px;font-size:11.8px;line-height:11.8px;color:#444746;transform:scaleX(1.0930);transform-origin:0 0;-webkit-text-stroke:0.3px #444746;">A</span>
<svg style="left:898px;top:186px;" width="13" height="6" viewBox="0 0 13 6"><g transform="translate(0.400 0.200)"><path d="M0 2.1 H10.6 M8.7 0.3 L10.6 2.1 L8.7 3.9" stroke="#444746" stroke-width="1.15" fill="none"/></g></svg>
<svg style="left:915px;top:181px;" width="9" height="5" viewBox="0 0 9 5"><g transform="translate(0.900 0.400)"><path d="M0 0 H7 L3.5 3.6 Z" fill="#444746"/></g></svg>
<div class="abs" style="left:930.05px;top:174.1px;width:0.9px;height:17.2px;background:#c7c9cc;"></div>
<svg style="left:940px;top:180px;" width="16" height="9" viewBox="0 0 16 9"><g transform="translate(0.400 0.000)"><g stroke="#444746" stroke-width="1.4" fill="none"><path d="M6 0.7 H3.55 a2.85 2.85 0 0 0 0 5.7 H6 M7.9 0.7 H10.35 a2.85 2.85 0 0 1 0 5.7 H7.9 M4.3 3.55 H9.6"/></g></g></svg>
<svg style="left:968px;top:177px;" width="16" height="14" viewBox="0 0 16 14"><g transform="translate(0.200 0.200)"><g stroke="#444746" stroke-width="1.4" fill="none" stroke-linejoin="round"><path d="M0.7 12 V1.7 a1 1 0 0 1 1 -1 H12.2 a1 1 0 0 1 1 1 V8.6 a1 1 0 0 1 -1 1 H3.2 Z"/><path d="M6.95 2.6 V7.6 M4.45 5.1 H9.45" stroke-width="1.25"/></g></g></svg>
<svg style="left:996px;top:177px;" width="15" height="14" viewBox="0 0 15 14"><g transform="translate(0.800 0.500)"><rect x="0.7" y="0.7" width="10.9" height="10.7" rx="1.3" stroke="#444746" stroke-width="1.4" fill="none"/><g fill="#444746"><rect x="3" y="5.4" width="1.45" height="3.8"/><rect x="5.45" y="3.2" width="1.45" height="6"/><rect x="7.9" y="7.6" width="1.45" height="1.6"/></g></g></svg>
<svg style="left:1025px;top:178px;" width="13" height="12" viewBox="0 0 13 12"><g transform="translate(0.500 0.300)"><path d="M0.8 0.7 H10 L6.4 5.4 V9.9 H4.4 V5.4 Z" stroke="#444746" stroke-width="1.4" fill="none" stroke-linejoin="round"/></g></svg>
<svg style="left:1049px;top:176px;" width="16" height="16" viewBox="0 0 16 16"><g transform="translate(0.400 0.800)"><g stroke="#444746" stroke-width="1.35" fill="none" stroke-linejoin="round"><path d="M0.7 9.8 V1.9 a1.2 1.2 0 0 1 1.2 -1.2 H10.2"/><rect x="3.3" y="3.3" width="10.3" height="9.8" rx="1.2"/><path d="M3.3 6.7 H13.6 M3.3 9.9 H13.6 M6.75 6.7 V13.1 M10.15 6.7 V13.1"/></g></g></svg>
<svg style="left:1069px;top:181px;" width="9" height="5" viewBox="0 0 9 5"><g transform="translate(0.300 0.400)"><path d="M0 0 H7 L3.5 3.6 Z" fill="#444746"/></g></svg>
<svg style="left:1091px;top:178px;" width="9" height="12" viewBox="0 0 9 12"><g transform="translate(0.000 0.300)"><path d="M7.6 2.2 V0.75 H0.9 L4.6 5.3 L0.9 9.85 H7.6 V8.4" stroke="#444746" stroke-width="1.75" fill="none" stroke-linejoin="miter"/></g></svg>
<svg style="left:1237px;top:181px;" width="11" height="7" viewBox="0 0 11 7"><g transform="translate(0.200 0.000)"><path d="M0.5 4.9 L4.6 0.9 L8.7 4.9" stroke="#444746" stroke-width="1.5" fill="none"/></g></svg>
<div class="abs" style="left:0px;top:207.2px;width:1280px;height:24.5px;background:#fff;"></div>
<span class="t" style="left:12.40px;top:215px;font-size:11.5px;line-height:11.5px;color:#1f1f1f;transform:scaleX(0.7962);transform-origin:0 0;-webkit-text-stroke:0.25px #1f1f1f;">A1</span>
<svg style="left:75px;top:217px;" width="8" height="5" viewBox="0 0 8 5"><g transform="translate(0.300 0.200)"><path d="M0 0 H6.6 L3.3 3.5 Z" fill="#444746"/></g></svg>
<div class="abs" style="left:92.1px;top:212.3px;width:0.9px;height:14.5px;background:#c7c9cc;"></div>
<span class="t" style="left:103.2px;top:208.6px;font-size:15.5px;line-height:18px;font-family:'Liberation Serif',serif;color:#9aa0a6;letter-spacing:-0.6px"><i>f</i>x</span>
<span class="t" style="left:123.30px;top:215px;font-size:11.3px;line-height:11.3px;color:#1f1f1f;transform:scaleX(0.9405);transform-origin:0 0;">Target Audience</span>
<div class="abs" style="left:0px;top:232px;width:1280px;height:568px;background:#fff;"></div>
<div class="abs" style="left:0px;top:231.5px;width:1280px;height:1px;background:#dddfe0;"></div>
<div class="abs" style="left:0px;top:232.5px;width:36px;height:17px;background:#f8f9fa;"></div>
<div class="abs" style="left:36px;top:232.5px;width:3.6px;height:20.5px;background:#c3c4c4;"></div>
<div class="abs" style="left:0px;top:249.2px;width:39.6px;height:3.8px;background:#c3c4c4;"></div>
<div class="abs" style="left:40px;top:232.5px;width:158.4px;height:20px;background:#d3e3fd;"></div>
<div class="abs" style="left:40px;top:252.2px;width:1230px;height:1px;background:#d3d5d5;"></div>
<span class="t" style="left:115.34px;top:239px;font-size:10px;line-height:10px;color:#0b1f4d;font-weight:700;">A</span>
<span class="t" style="left:274.07px;top:239px;font-size:10px;line-height:10px;color:#444746;">B</span>
<span class="t" style="left:432.09px;top:239px;font-size:10px;line-height:10px;color:#444746;">C</span>
<span class="t" style="left:590.64px;top:239px;font-size:10px;line-height:10px;color:#444746;">D</span>
<span class="t" style="left:749.42px;top:239px;font-size:10px;line-height:10px;color:#444746;">E</span>
<span class="t" style="left:908.25px;top:239px;font-size:10px;line-height:10px;color:#444746;">F</span>
<span class="t" style="left:1065.91px;top:239px;font-size:10px;line-height:10px;color:#444746;">G</span>
<span class="t" style="left:1189.19px;top:239px;font-size:10px;line-height:10px;color:#444746;">H</span>
<div class="abs" style="left:197.9px;top:232.5px;width:1px;height:20px;background:#dcdddd;"></div>
<div class="abs" style="left:355.9px;top:232.5px;width:1px;height:20px;background:#dcdddd;"></div>
<div class="abs" style="left:514.5px;top:232.5px;width:1px;height:20px;background:#dcdddd;"></div>
<div class="abs" style="left:673.0px;top:232.5px;width:1px;height:20px;background:#dcdddd;"></div>
<div class="abs" style="left:831.5px;top:232.5px;width:1px;height:20px;background:#dcdddd;"></div>
<div class="abs" style="left:990.1px;top:232.5px;width:1px;height:20px;background:#dcdddd;"></div>
<div class="abs" style="left:1148.5px;top:232.5px;width:1px;height:20px;background:#dcdddd;"></div>
<div class="abs" style="left:1236.1px;top:232.5px;width:1px;height:20px;background:#dcdddd;"></div>
<div class="abs" style="left:1269.3px;top:232.5px;width:1px;height:20px;background:#dcdddd;"></div>
<div class="abs" style="left:39.0px;top:253px;width:1px;height:535.4px;background:#cbcccc;"></div>
<div class="abs" style="left:197.9px;top:253px;width:1px;height:535.4px;background:#e2e3e3;"></div>
<div class="abs" style="left:355.9px;top:253px;width:1px;height:535.4px;background:#e2e3e3;"></div>
<div class="abs" style="left:514.5px;top:253px;width:1px;height:535.4px;background:#e2e3e3;"></div>
<div class="abs" style="left:673.0px;top:253px;width:1px;height:535.4px;background:#e2e3e3;"></div>
<div class="abs" style="left:831.5px;top:253px;width:1px;height:535.4px;background:#e2e3e3;"></div>
<div class="abs" style="left:990.1px;top:253px;width:1px;height:535.4px;background:#e2e3e3;"></div>
<div class="abs" style="left:1148.5px;top:253px;width:1px;height:535.4px;background:#e2e3e3;"></div>
<div class="abs" style="left:1236.1px;top:253px;width:1px;height:535.4px;background:#e2e3e3;"></div>
<div class="abs" style="left:1269.3px;top:253px;width:1px;height:535.4px;background:#e2e3e3;"></div>
<div class="abs" style="left:0px;top:259.9px;width:1269.8px;height:1px;background:#e2e3e3;"></div>
<div class="abs" style="left:0px;top:259.9px;width:39px;height:1px;background:#d6d7d7;"></div>
<div class="abs" style="left:0px;top:292.2px;width:1269.8px;height:1px;background:#e2e3e3;"></div>
<div class="abs" style="left:0px;top:292.2px;width:39px;height:1px;background:#d6d7d7;"></div>
<div class="abs" style="left:0px;top:324.5px;width:1269.8px;height:1px;background:#e2e3e3;"></div>
<div class="abs" style="left:0px;top:324.5px;width:39px;height:1px;background:#d6d7d7;"></div>
<div class="abs" style="left:0px;top:356.8px;width:1269.8px;height:1px;background:#e2e3e3;"></div>
<div class="abs" style="left:0px;top:356.8px;width:39px;height:1px;background:#d6d7d7;"></div>
<div class="abs" style="left:0px;top:431.1px;width:1269.8px;height:1px;background:#e2e3e3;"></div>
<div class="abs" style="left:0px;top:431.1px;width:39px;height:1px;background:#d6d7d7;"></div>
<div class="abs" style="left:0px;top:490.8px;width:1269.8px;height:1px;background:#e2e3e3;"></div>
<div class="abs" style="left:0px;top:490.8px;width:39px;height:1px;background:#d6d7d7;"></div>
<div class="abs" style="left:0px;top:537.0px;width:1269.8px;height:1px;background:#e2e3e3;"></div>
<div class="abs" style="left:0px;top:537.0px;width:39px;height:1px;background:#d6d7d7;"></div>
<div class="abs" style="left:0px;top:596.9px;width:1269.8px;height:1px;background:#e2e3e3;"></div>
<div class="abs" style="left:0px;top:596.9px;width:39px;height:1px;background:#d6d7d7;"></div>
<div class="abs" style="left:0px;top:656.9px;width:1269.8px;height:1px;background:#e2e3e3;"></div>
<div class="abs" style="left:0px;top:656.9px;width:39px;height:1px;background:#d6d7d7;"></div>
<div class="abs" style="left:0px;top:689.1px;width:1269.8px;height:1px;background:#e2e3e3;"></div>
<div class="abs" style="left:0px;top:689.1px;width:39px;height:1px;background:#d6d7d7;"></div>
<div class="abs" style="left:0px;top:735.0px;width:1269.8px;height:1px;background:#e2e3e3;"></div>
<div class="abs" style="left:0px;top:735.0px;width:39px;height:1px;background:#d6d7d7;"></div>
<div class="abs" style="left:0px;top:753.7px;width:1269.8px;height:1px;background:#e2e3e3;"></div>
<div class="abs" style="left:0px;top:753.7px;width:39px;height:1px;background:#d6d7d7;"></div>
<svg style="left:1148px;top:254px;" width="3" height="536" viewBox="0 0 3 536"><g transform="translate(0.100 0.900)"><path d="M0.9 0 V533.5" stroke="#9dd0a2" stroke-width="1.8" stroke-dasharray="2.7 1.58" fill="none"/></g></svg>
<div class="abs" style="left:0;top:253px;width:1270px;height:535.4px;overflow:hidden">
<span class="t cr" style="left:556.31px;top:-4px;font-size:10.45px;line-height:10.45px;color:#000;transform:scaleX(1.0463);transform-origin:0 0;">highlight alumni</span>
<span class="t cb" style="left:42.60px;top:21px;font-size:10.45px;line-height:10.45px;color:#000;font-weight:700;transform:scaleX(0.9781);transform-origin:0 0;">Alumni</span>
<span class="t cr" style="left:250.22px;top:21px;font-size:10.45px;line-height:10.45px;color:#000;">Fundraising</span>
<span class="t cr" style="left:363.09px;top:14px;font-size:10.45px;line-height:10.45px;color:#000;">Direct Email, Newsletter, Social</span>
<span class="t cr" style="left:402.61px;top:28px;font-size:10.45px;line-height:10.45px;color:#000;">Media, Events</span>
<span class="t cr" style="left:519.75px;top:14px;font-size:10.45px;line-height:10.45px;color:#000;transform:scaleX(1.0110);transform-origin:0 0;">Clear explanation of need, clear</span>
<span class="t cr" style="left:542.42px;top:28px;font-size:10.45px;line-height:10.45px;color:#000;transform:scaleX(1.0445);transform-origin:0 0;">explanation of benefit</span>
<span class="t" style="left:16.82px;top:19px;font-size:10px;line-height:10px;color:#3f4246;">3</span>
<span class="t cb" style="left:42.60px;top:53px;font-size:10.45px;line-height:10.45px;color:#000;font-weight:700;transform:scaleX(0.9781);transform-origin:0 0;">Alumni</span>
<span class="t cr" style="left:247.16px;top:53px;font-size:10.45px;line-height:10.45px;color:#000;transform:scaleX(1.0423);transform-origin:0 0;">Volunteering</span>
<span class="t cr" style="left:377.87px;top:53px;font-size:10.45px;line-height:10.45px;color:#000;transform:scaleX(1.0121);transform-origin:0 0;">Newsletter, Social Media</span>
<span class="t cr" style="left:524.50px;top:46px;font-size:10.45px;line-height:10.45px;color:#000;transform:scaleX(1.0320);transform-origin:0 0;">Profile beneficiaries, promote</span>
<span class="t cr" style="left:562.28px;top:60px;font-size:10.45px;line-height:10.45px;color:#000;transform:scaleX(1.0699);transform-origin:0 0;">opportunities</span>
<span class="t" style="left:16.82px;top:52px;font-size:10px;line-height:10px;color:#3f4246;">4</span>
<span class="t cb" style="left:42.60px;top:86px;font-size:10.45px;line-height:10.45px;color:#000;font-weight:700;transform:scaleX(0.9569);transform-origin:0 0;">Prospective Adult Program</span>
<span class="t cr" style="left:248.23px;top:86px;font-size:10.45px;line-height:10.45px;color:#000;transform:scaleX(1.0368);transform-origin:0 0;">Recruitment</span>
<span class="t cr" style="left:371.29px;top:86px;font-size:10.45px;line-height:10.45px;color:#000;transform:scaleX(0.9655);transform-origin:0 0;">Press Release, Social Media</span>
<span class="t cr" style="left:526.97px;top:79px;font-size:10.45px;line-height:10.45px;color:#000;transform:scaleX(1.0354);transform-origin:0 0;">Highlight alumni and current</span>
<span class="t cr" style="left:527.64px;top:93px;font-size:10.45px;line-height:10.45px;color:#000;">class, endorsements, quotes</span>
<span class="t" style="left:16.82px;top:84px;font-size:10px;line-height:10px;color:#3f4246;">5</span>
<span class="t cb" style="left:42.60px;top:139px;font-size:10.45px;line-height:10.45px;color:#000;font-weight:700;transform:scaleX(0.9334);transform-origin:0 0;">Business/Org Sponsor</span>
<span class="t cr" style="left:248.23px;top:139px;font-size:10.45px;line-height:10.45px;color:#000;transform:scaleX(1.0368);transform-origin:0 0;">Recruitment</span>
<span class="t cr" style="left:369.84px;top:132px;font-size:10.45px;line-height:10.45px;color:#000;transform:scaleX(0.9661);transform-origin:0 0;">Press Release, Social Media,</span>
<span class="t cr" style="left:408.26px;top:146px;font-size:10.45px;line-height:10.45px;color:#000;transform:scaleX(1.0514);transform-origin:0 0;">Networking</span>
<span class="t cr" style="left:538.71px;top:111px;font-size:10.45px;line-height:10.45px;color:#000;transform:scaleX(1.0075);transform-origin:0 0;">Connect leadership and</span>
<span class="t cr" style="left:518.36px;top:125px;font-size:10.45px;line-height:10.45px;color:#000;transform:scaleX(0.9761);transform-origin:0 0;">business advantages, succession</span>
<span class="t cr" style="left:529.32px;top:139px;font-size:10.45px;line-height:10.45px;color:#000;transform:scaleX(1.0266);transform-origin:0 0;">planning, practical benefits,</span>
<span class="t cr" style="left:550.01px;top:153px;font-size:10.45px;line-height:10.45px;color:#000;transform:scaleX(1.0446);transform-origin:0 0;">high profile alumni</span>
<span class="t cr" style="left:562.70px;top:167px;font-size:10.45px;line-height:10.45px;color:#000;transform:scaleX(1.0359);transform-origin:0 0;">endorsement</span>
<span class="t" style="left:16.82px;top:137px;font-size:10px;line-height:10px;color:#3f4246;">6</span>
<span class="t cb" style="left:42.60px;top:206px;font-size:10.45px;line-height:10.45px;color:#000;font-weight:700;transform:scaleX(0.9525);transform-origin:0 0;">Business/Organization</span>
<span class="t cr" style="left:250.22px;top:206px;font-size:10.45px;line-height:10.45px;color:#000;">Fundraising</span>
<span class="t cr" style="left:363.68px;top:199px;font-size:10.45px;line-height:10.45px;color:#000;">Direct Mail, Direct Email, Press</span>
<span class="t cr" style="left:387.43px;top:213px;font-size:10.45px;line-height:10.45px;color:#000;">Release, Networking</span>
<span class="t cr" style="left:533.18px;top:185px;font-size:10.45px;line-height:10.45px;color:#000;transform:scaleX(1.0387);transform-origin:0 0;">Value propostion of youth</span>
<span class="t cr" style="left:530.19px;top:199px;font-size:10.45px;line-height:10.45px;color:#000;transform:scaleX(1.0319);transform-origin:0 0;">programming connected to</span>
<span class="t cr" style="left:533.72px;top:213px;font-size:10.45px;line-height:10.45px;color:#000;transform:scaleX(0.9889);transform-origin:0 0;">needs of local businesses,</span>
<span class="t cr" style="left:519.53px;top:227px;font-size:10.45px;line-height:10.45px;color:#000;transform:scaleX(1.0220);transform-origin:0 0;">education leaders endorsement</span>
<span class="t" style="left:16.82px;top:204px;font-size:10px;line-height:10px;color:#3f4246;">7</span>
<span class="t cb" style="left:42.60px;top:259px;font-size:10.45px;line-height:10.45px;color:#000;font-weight:700;transform:scaleX(0.9363);transform-origin:0 0;">Golf Sponsor</span>
<span class="t cr" style="left:250.22px;top:259px;font-size:10.45px;line-height:10.45px;color:#000;">Fundraising</span>
<span class="t cr" style="left:377.35px;top:252px;font-size:10.45px;line-height:10.45px;color:#000;transform:scaleX(1.0215);transform-origin:0 0;">Direct Mail, Direct Email,</span>
<span class="t cr" style="left:408.26px;top:266px;font-size:10.45px;line-height:10.45px;color:#000;transform:scaleX(1.0514);transform-origin:0 0;">Networking</span>
<span class="t cr" style="left:527.81px;top:245px;font-size:10.45px;line-height:10.45px;color:#000;transform:scaleX(1.0270);transform-origin:0 0;">Qualify targets, peer to peer</span>
<span class="t cr" style="left:536.84px;top:259px;font-size:10.45px;line-height:10.45px;color:#000;transform:scaleX(1.0097);transform-origin:0 0;">asks, statement of need,</span>
<span class="t cr" style="left:540.16px;top:273px;font-size:10.45px;line-height:10.45px;color:#000;transform:scaleX(1.0358);transform-origin:0 0;">explanation of benefits</span>
<span class="t" style="left:16.82px;top:257px;font-size:10px;line-height:10px;color:#3f4246;">8</span>
<span class="t cb" style="left:42.60px;top:312px;font-size:10.45px;line-height:10.45px;color:#000;font-weight:700;transform:scaleX(0.9665);transform-origin:0 0;">Golf Participant</span>
<span class="t cr" style="left:250.22px;top:312px;font-size:10.45px;line-height:10.45px;color:#000;">Fundraising</span>
<span class="t cr" style="left:377.35px;top:305px;font-size:10.45px;line-height:10.45px;color:#000;transform:scaleX(1.0215);transform-origin:0 0;">Direct Mail, Direct Email,</span>
<span class="t cr" style="left:408.26px;top:319px;font-size:10.45px;line-height:10.45px;color:#000;transform:scaleX(1.0514);transform-origin:0 0;">Networking</span>
<span class="t cr" style="left:527.81px;top:291px;font-size:10.45px;line-height:10.45px;color:#000;transform:scaleX(1.0270);transform-origin:0 0;">Qualify targets, peer to peer</span>
<span class="t cr" style="left:537.38px;top:305px;font-size:10.45px;line-height:10.45px;color:#000;transform:scaleX(1.0211);transform-origin:0 0;">asks, alumni networking</span>
<span class="t cr" style="left:518.72px;top:319px;font-size:10.45px;line-height:10.45px;color:#000;transform:scaleX(1.0456);transform-origin:0 0;">opportunities, prospective adult</span>
<span class="t cr" style="left:573.93px;top:333px;font-size:10.45px;line-height:10.45px;color:#000;transform:scaleX(1.0300);transform-origin:0 0;">students</span>
<span class="t" style="left:16.82px;top:310px;font-size:10px;line-height:10px;color:#3f4246;">9</span>
<span class="t cb" style="left:42.60px;top:372px;font-size:10.45px;line-height:10.45px;color:#000;font-weight:700;transform:scaleX(0.9436);transform-origin:0 0;">Lapsed Donor</span>
<span class="t cr" style="left:250.22px;top:372px;font-size:10.45px;line-height:10.45px;color:#000;">Fundraising</span>
<span class="t cr" style="left:377.35px;top:365px;font-size:10.45px;line-height:10.45px;color:#000;transform:scaleX(1.0215);transform-origin:0 0;">Direct Mail, Direct Email,</span>
<span class="t cr" style="left:408.26px;top:379px;font-size:10.45px;line-height:10.45px;color:#000;transform:scaleX(1.0514);transform-origin:0 0;">Networking</span>
<span class="t cr" style="left:534.91px;top:351px;font-size:10.45px;line-height:10.45px;color:#000;transform:scaleX(1.0279);transform-origin:0 0;">Update on programming,</span>
<span class="t cr" style="left:536.27px;top:365px;font-size:10.45px;line-height:10.45px;color:#000;transform:scaleX(1.0465);transform-origin:0 0;">highlight current alumni,</span>
<span class="t cr" style="left:542.41px;top:379px;font-size:10.45px;line-height:10.45px;color:#000;transform:scaleX(1.0449);transform-origin:0 0;">highlight recent youth</span>
<span class="t cr" style="left:547.12px;top:393px;font-size:10.45px;line-height:10.45px;color:#000;">graduates, nostalgia</span>
<span class="t" style="left:14.04px;top:370px;font-size:10px;line-height:10px;color:#3f4246;">10</span>
<span class="t cb" style="left:42.60px;top:418px;font-size:10.45px;line-height:10.45px;color:#000;font-weight:700;transform:scaleX(0.9436);transform-origin:0 0;">Lapsed Donor</span>
<span class="t cr" style="left:250.95px;top:418px;font-size:10.45px;line-height:10.45px;color:#000;transform:scaleX(0.9909);transform-origin:0 0;">Engagment</span>
<span class="t cr" style="left:360.99px;top:411px;font-size:10.45px;line-height:10.45px;color:#000;transform:scaleX(1.0141);transform-origin:0 0;">Social Media, Newsletter, Direct</span>
<span class="t cr" style="left:422.80px;top:425px;font-size:10.45px;line-height:10.45px;color:#000;transform:scaleX(0.9884);transform-origin:0 0;">Email</span>
<span class="t cr" style="left:555.87px;top:411px;font-size:10.45px;line-height:10.45px;color:#000;transform:scaleX(1.0499);transform-origin:0 0;">Contributions to</span>
<span class="t cr" style="left:550.31px;top:425px;font-size:10.45px;line-height:10.45px;color:#000;transform:scaleX(1.0668);transform-origin:0 0;">community/region</span>
<span class="t" style="left:14.41px;top:416px;font-size:10px;line-height:10px;color:#3f4246;">11</span>
<span class="t cb" style="left:42.60px;top:457px;font-size:10.45px;line-height:10.45px;color:#000;font-weight:700;transform:scaleX(0.9700);transform-origin:0 0;">Current Donor</span>
<span class="t cr" style="left:250.22px;top:457px;font-size:10.45px;line-height:10.45px;color:#000;">Fundraising</span>
<span class="t cr" style="left:362.58px;top:450px;font-size:10.45px;line-height:10.45px;color:#000;transform:scaleX(1.0168);transform-origin:0 0;">Newsletter, Direct Email, Direct</span>
<span class="t cr" style="left:425.31px;top:464px;font-size:10.45px;line-height:10.45px;color:#000;transform:scaleX(1.0862);transform-origin:0 0;">Mail</span>
<span class="t cr" style="left:530.82px;top:443px;font-size:10.45px;line-height:10.45px;color:#000;transform:scaleX(1.0217);transform-origin:0 0;">Ongoing value proposition,</span>
<span class="t cr" style="left:522.32px;top:457px;font-size:10.45px;line-height:10.45px;color:#000;transform:scaleX(1.0333);transform-origin:0 0;">current progamming activities,</span>
<span class="t cr" style="left:528.17px;top:471px;font-size:10.45px;line-height:10.45px;color:#000;transform:scaleX(1.0449);transform-origin:0 0;">define return on investment</span>
<span class="t" style="left:14.04px;top:455px;font-size:10px;line-height:10px;color:#3f4246;">12</span>
<span class="t cb" style="left:42.60px;top:489px;font-size:10.45px;line-height:10.45px;color:#000;font-weight:700;transform:scaleX(0.9700);transform-origin:0 0;">Current Donor</span>
<span class="t cr" style="left:250.95px;top:489px;font-size:10.45px;line-height:10.45px;color:#000;transform:scaleX(0.9909);transform-origin:0 0;">Engagment</span>
<span class="t cr" style="left:379.45px;top:489px;font-size:10.45px;line-height:10.45px;color:#000;transform:scaleX(1.0155);transform-origin:0 0;">Newsletter, Direct Email</span>
<span class="t cr" style="left:552.87px;top:489px;font-size:10.45px;line-height:10.45px;color:#000;transform:scaleX(1.0359);transform-origin:0 0;">Value proposition</span>
<span class="t" style="left:14.04px;top:488px;font-size:10px;line-height:10px;color:#3f4246;">13</span>
<span class="t cb" style="left:42.60px;top:529px;font-size:10.45px;line-height:10.45px;color:#000;font-weight:700;transform:scaleX(0.9598);transform-origin:0 0;">Prospective Student Participant</span>
<span class="t cr" style="left:248.23px;top:529px;font-size:10.45px;line-height:10.45px;color:#000;transform:scaleX(1.0368);transform-origin:0 0;">Recruitment</span>
<span class="t cr" style="left:361.71px;top:529px;font-size:10.45px;line-height:10.45px;color:#000;transform:scaleX(1.0083);transform-origin:0 0;">Social Media, Email, Newsletter</span>
<span class="t cr" style="left:533.65px;top:508px;font-size:10.45px;line-height:10.45px;color:#000;transform:scaleX(1.0292);transform-origin:0 0;">Endorsement from recent</span>
<span class="t cr" style="left:539.97px;top:522px;font-size:10.45px;line-height:10.45px;color:#000;">graduates, examples of</span>
<span class="t cr" style="left:540.91px;top:536px;font-size:10.45px;line-height:10.45px;color:#000;transform:scaleX(0.9886);transform-origin:0 0;">success, highlight skills</span>
<span class="t cr" style="left:560.86px;top:550px;font-size:10.45px;line-height:10.45px;color:#000;transform:scaleX(1.0187);transform-origin:0 0;">and outcomes</span>
<span class="t" style="left:14.04px;top:527px;font-size:10px;line-height:10px;color:#3f4246;">14</span>
</div>
<div class="abs" style="left:0px;top:788.4px;width:1280px;height:12.600000000000023px;background:#fff;"></div>
<div class="abs" style="left:0px;top:788.0px;width:1270px;height:1px;background:#e6e7e7;"></div>
<div class="abs" style="left:0px;top:788.4px;width:39px;height:10.800000000000068px;background:#f5f6f6;"></div>
<div class="abs" style="left:39px;top:788.4px;width:1px;height:10.800000000000068px;background:#d6d8d8;"></div>
<svg style="left:42px;top:790px;" width="531" height="9" viewBox="0 0 531 9"><g transform="translate(0.200 0.300)"><rect width="529.3" height="7.2" rx="3.6" fill="#dadce0"/></g></svg>
<div class="abs" style="left:1270.2px;top:232.5px;width:9.8px;height:20.2px;background:#f8f9fa;"></div>
<div class="abs" style="left:1270.2px;top:252.7px;width:9.8px;height:547px;background:#fff;"></div>
<div class="abs" style="left:1269.6px;top:232.5px;width:1px;height:556px;background:#e9eaea;"></div>
<svg style="left:1271px;top:255px;" width="9" height="24" viewBox="0 0 9 24"><g transform="translate(0.600 0.400)"><rect width="7.4" height="22.4" rx="3.7" fill="#dadce0"/></g></svg>
<div class="abs" style="left:0px;top:800px;width:1280px;height:1px;background:#e6e8ea;"></div>
<div class="abs" style="left:0px;top:801px;width:1280px;height:31px;background:#f9fbfd;"></div>
<svg style="left:1272px;top:765px;" width="7" height="5" viewBox="0 0 7 5"><g transform="translate(0.800 0.200)"><path d="M0 3.2 L2.5 0 L5 3.2 Z" fill="#c4c7c5"/></g></svg>
<svg style="left:1272px;top:779px;" width="7" height="5" viewBox="0 0 7 5"><g transform="translate(0.800 0.800)"><path d="M0 0 L2.5 3.2 L5 0 Z" fill="#c4c7c5"/></g></svg>
<div class="abs" style="left:1242.5px;top:788.4px;width:27.8px;height:10.6px;background:#f8f9fa;border:1px solid #e4e5e7;border-bottom:none"></div>
<div class="abs" style="left:1256.2px;top:788.4px;width:0.9px;height:10.6px;background:#e4e5e7;"></div>
<svg style="left:1248px;top:792px;" width="4" height="6" viewBox="0 0 4 6"><g transform="translate(0.000 0.400)"><path d="M3 0 L0 2 L3 4 Z" fill="#b9bcbf"/></g></svg>
<svg style="left:1262px;top:792px;" width="5" height="6" viewBox="0 0 5 6"><g transform="translate(0.300 0.400)"><path d="M0 0 L3 2 L0 4 Z" fill="#b9bcbf"/></g></svg>
<svg style="left:48px;top:812px;" width="11" height="11" viewBox="0 0 11 11"><g transform="translate(0.900 0.400)"><path d="M4.5 0 V9 M0 4.5 H9" stroke="#444746" stroke-width="1.4" fill="none"/></g></svg>
<svg style="left:82px;top:812px;" width="14" height="11" viewBox="0 0 14 11"><g transform="translate(0.000 0.600)"><path d="M0 0.7 H12.5 M0 4.2 H12.5 M0 7.7 H12.5" stroke="#444746" stroke-width="1.4" fill="none"/></g></svg>
<div class="abs" style="left:116.3px;top:801px;width:96.9px;height:31px;background:#e1e9f7;"></div>
<span class="t" style="left:127.20px;top:811px;font-size:12.3px;line-height:12.3px;color:#1a56d0;transform:scaleX(1.1435);transform-origin:0 0;-webkit-text-stroke:0.45px #1a56d0;">Overview</span>
<svg style="left:196px;top:815px;" width="8" height="5" viewBox="0 0 8 5"><g transform="translate(0.000 0.400)"><path d="M0 0 H7 L3.5 3.6 Z" fill="#1a56d0"/></g></svg>
<span class="t" style="left:224.20px;top:811px;font-size:12.3px;line-height:12.3px;color:#444746;transform:scaleX(1.0243);transform-origin:0 0;-webkit-text-stroke:0.3px #444746;">Q&amp;A</span>
<svg style="left:260px;top:815px;" width="9" height="5" viewBox="0 0 9 5"><g transform="translate(0.900 0.400)"><path d="M0 0 H7 L3.5 3.6 Z" fill="#444746"/></g></svg>
<span class="t" style="left:290.20px;top:811px;font-size:12.3px;line-height:12.3px;color:#444746;transform:scaleX(1.0867);transform-origin:0 0;-webkit-text-stroke:0.3px #444746;">Action Plan</span>
<svg style="left:368px;top:815px;" width="9" height="5" viewBox="0 0 9 5"><g transform="translate(0.400 0.400)"><path d="M0 0 H7 L3.5 3.6 Z" fill="#444746"/></g></svg>
<svg style="left:1253px;top:814px;" width="7" height="9" viewBox="0 0 7 9"><g transform="translate(0.000 0.500)"><path d="M4.6 0.4 L0.9 3.7 L4.6 7" stroke="#444746" stroke-width="1.4" fill="none"/></g></svg>
<div class="abs" style="left:1090.9px;top:763.2px;width:181.6px;height:28.6px;background:#fff;border-radius:7px;box-shadow:0 1px 2.5px rgba(60,64,67,.32),0 1px 4px 1px rgba(60,64,67,.16)"></div>
<svg style="left:1099px;top:771px;" width="15" height="14" viewBox="0 0 15 14"><g transform="translate(0.300 0.000)"><path d="M6.5 0 C6.9 3.9 9.1 6.1 13 6.5 C9.1 6.9 6.9 9.1 6.5 13 C6.1 9.1 3.9 6.9 0 6.5 C3.9 6.1 6.1 3.9 6.5 0 Z" fill="#2b8038"/></g></svg>
<span class="t" style="left:1120.90px;top:772px;font-size:12.4px;line-height:12.4px;color:#2b8038;transform:scaleX(1.0952);transform-origin:0 0;-webkit-text-stroke:0.4px #2b8038;">Convert to table</span>
<svg style="left:1233px;top:771px;" width="5" height="5" viewBox="0 0 5 5"><g transform="translate(0.950 0.550)"><circle cx="1.25" cy="1.25" r="1.25" fill="#2d2f31"/></g></svg>
<svg style="left:1233px;top:776px;" width="5" height="4" viewBox="0 0 5 4"><g transform="translate(0.950 0.250)"><circle cx="1.25" cy="1.25" r="1.25" fill="#2d2f31"/></g></svg>
<svg style="left:1233px;top:780px;" width="5" height="5" viewBox="0 0 5 5"><g transform="translate(0.950 0.950)"><circle cx="1.25" cy="1.25" r="1.25" fill="#2d2f31"/></g></svg>
<svg style="left:1252px;top:773px;" width="10" height="10" viewBox="0 0 10 10"><g transform="translate(0.300 0.200)"><path d="M0.3 0.3 L8.3 8.3 M8.3 0.3 L0.3 8.3" stroke="#2d2f31" stroke-width="1.3" fill="none"/></g></svg>
</div></body></html>
